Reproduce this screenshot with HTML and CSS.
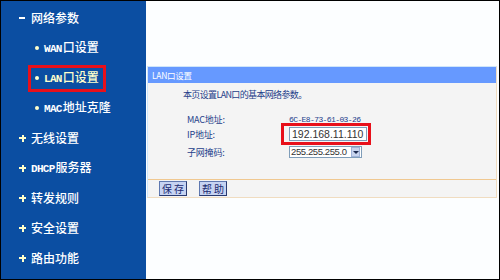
FILE: index.html
```html
<!DOCTYPE html>
<html lang="zh-CN">
<head>
<meta charset="utf-8">
<title>LAN口设置</title>
<link rel="stylesheet" href="styles.css">
</head>
<body>
<div class="frame">
  <nav class="sidebar">
    <div class="item top"><span class="mark"></span><span class="label">网络参数</span></div>
    <div class="item sub"><span class="dot"></span><span class="label"><span class="lat">WAN</span>口设置</span></div>
    <div class="item sub"><span class="hl"><span class="dot"></span><span class="label active"><span class="lat">LAN</span>口设置</span></span></div>
    <div class="item sub"><span class="dot"></span><span class="label"><span class="lat">MAC</span>地址克隆</span></div>
    <div class="item top"><span class="plus"></span><span class="label">无线设置</span></div>
    <div class="item top"><span class="plus"></span><span class="label"><span class="lat">DHCP</span>服务器</span></div>
    <div class="item top"><span class="plus"></span><span class="label">转发规则</span></div>
    <div class="item top"><span class="plus"></span><span class="label">安全设置</span></div>
    <div class="item top"><span class="plus"></span><span class="label">路由功能</span></div>
  </nav>
  <main class="main">
    <section class="panel">
      <div class="panel-head">LAN口设置</div>
      <div class="panel-body">
        <p class="intro">本页设置LAN口的基本网络参数。</p>
        <div class="row mac"><span class="key">MAC地址:</span><span class="val">6C-E8-73-61-03-26</span></div>
        <div class="row ip"><span class="key">IP地址:</span><span class="redbox"><span class="input">192.168.11.110</span></span></div>
        <div class="row mask"><span class="key">子网掩码:</span><span class="select"><span class="sel-text">255.255.255.0</span><span class="arrow"></span></span></div>
      </div>
      <div class="panel-foot">
        <span class="btn">保 存</span>
        <span class="btn">帮 助</span>
      </div>
    </section>
  </main>
</div>
</body>
</html>
```
FILE: styles.css
```css
* { box-sizing: border-box; }
html, body { margin: 0; padding: 0; background: #fff; }
.frame {
  width: 500px; height: 280px;
  border: 1px solid #000;
  display: flex;
  background: #fcfeff;
  overflow: hidden;
}
.sidebar {
  width: 145px;
  flex: none;
  background: #0b4ea2;
  padding-top: 2px;
  font-family: "Noto Sans CJK SC", sans-serif;
  color: #fff;
}
.item {
  height: 30px;
  display: flex;
  align-items: center;
  font-size: 12px;
  font-weight: 500;
  line-height: 1;
}
.item.top { padding-left: 18px; }
.item.sub { padding-left: 34px; }
.mark {
  width: 6px; height: 2px;
  background: #fff;
  margin-right: 6px;
}
.plus {
  width: 7px; height: 7px;
  margin-right: 5px;
  background:
    linear-gradient(#ffffcc, #ffffcc) center / 7px 2px no-repeat,
    linear-gradient(#ffffcc, #ffffcc) center / 2px 7px no-repeat;
}
.dot {
  width: 4px; height: 4px; border-radius: 50%;
  background: #ffffcc; margin-right: 5px;
}
.lat {
  font-family: "Liberation Mono", monospace;
  font-weight: 700;
  font-size: 11px;
  letter-spacing: -0.7px;
  margin-right: 1px;
}
.hl {
  display: inline-flex; align-items: center;
  border: 3px solid #e8101a;
  margin-left: -7px;
  padding: 0 4px 0 4px;
  height: 27px;
}
.active { color: #ffffcc; }
.main {
  flex: 1;
  padding: 65px 2px 0 1px;
}
.panel {
  border: 1px solid #f0dcc0;
  border-left-color: #cfe6fa;
  border-top-color: #cfe6fa;
  background: #f4f4f4;
  font-family: "Noto Sans CJK SC", sans-serif;
  font-size: 9px;
  color: #24408a;
}
.panel-head {
  height: 16px;
  background: #6699ff;
  color: #fff;
  padding-left: 4px;
  line-height: 16px;
  font-size: 8.5px;
  letter-spacing: -0.3px;
}
.panel-body {
  height: 97px;
  padding: 5px 0 0 35px;
  border-bottom: 1px solid #f0c890;
}
.intro {
  margin: 0 0 10px 0;
  height: 14px; line-height: 14px;
  font-size: 9px;
  letter-spacing: -0.65px;
}
.row {
  display: flex; align-items: center;
  padding-left: 4px;
}
.row.mac { height: 14px; }
.row.ip { height: 16px; }
.row.mask { height: 12px; margin-top: 4px; }
.key { width: 102px; font-size: 9px; letter-spacing: -0.2px; }
.val {
  font-family: "Liberation Mono", monospace;
  font-size: 8px;
  letter-spacing: -0.6px;
  color: #24408a;
}
.redbox {
  display: inline-flex;
  border: 3px solid #e8101a;
  padding: 1px 1px 1px 5px;
  margin: -4px 0 -4px -8px;
}
.input {
  width: 78px; height: 14px;
  border: 1px solid #7f9db9;
  background: #fff;
  color: #333;
  font-family: "Liberation Sans", sans-serif;
  font-size: 10.5px;
  line-height: 12px;
  padding-left: 2px;
}
.select {
  display: inline-flex; align-items: center;
  width: 73px; height: 12px;
  border: 1px solid #7f9db9;
  background: #fff;
}
.sel-text {
  flex: 1;
  color: #333;
  font-family: "Liberation Sans", sans-serif;
  font-size: 9.5px;
  letter-spacing: -0.4px;
  line-height: 10px;
  padding-left: 1px;
  white-space: nowrap;
  overflow: hidden;
}
.arrow {
  width: 9px; height: 10px;
  margin-right: 1px;
  background: #c8d4ee;
  border: 1px solid #9fb2d8;
  position: relative;
  flex: none;
}
.arrow::after {
  content: "";
  position: absolute; left: 1px; top: 3px;
  border-left: 3px solid transparent;
  border-right: 3px solid transparent;
  border-top: 3px solid #1c2a50;
}
.panel-foot {
  height: 17px;
  display: flex; align-items: center; gap: 12px;
  padding-left: 11px;
}
.btn {
  display: inline-block;
  width: 28px; height: 15px;
  background: #c6d3f2;
  border: 1px solid #5f78b0;
  border-right-color: #2a3a70; border-bottom-color: #2a3a70;
  color: #1c2a70;
  font-size: 10px;
  line-height: 13px;
  text-align: center;
}
```
